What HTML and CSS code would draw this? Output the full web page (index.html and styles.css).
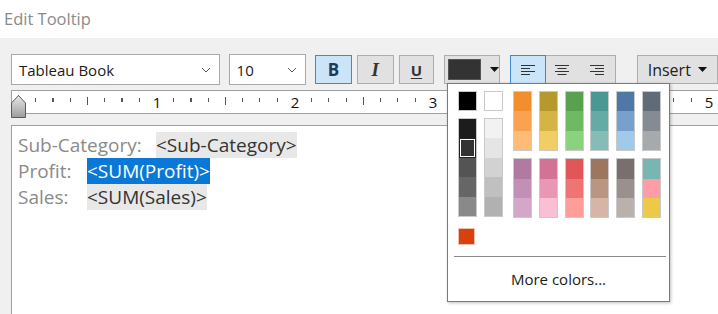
FILE: index.html
```html
<!DOCTYPE html>
<html lang="en">
<head>
    <meta charset="UTF-8">
    <title>Edit Tooltip</title>
    <link rel="stylesheet" href="styles.css">
</head>
<body>
    <div class="titlebar">Edit Tooltip</div>

    <div class="panel">
        <div class="toolbar">
            <div class="combo font-combo">
                <span>Tableau Book</span>
                <svg class="chev" width="10" height="6" viewBox="0 0 10 6"><polyline points="1,1 5,5 9,1" fill="none" stroke="#555" stroke-width="1"/></svg>
            </div>
            <div class="combo size-combo">
                <span>10</span>
                <svg class="chev" width="10" height="6" viewBox="0 0 10 6"><polyline points="1,1 5,5 9,1" fill="none" stroke="#555" stroke-width="1"/></svg>
            </div>
            <div class="btn fmt active bold">B</div>
            <div class="btn fmt italic">I</div>
            <div class="btn fmt underline">U</div>
            <div class="btn color-btn">
                <span class="cur-color"></span>
                <svg width="9" height="5" viewBox="0 0 9 5"><polygon points="0,0 9,0 4.5,5" fill="#111"/></svg>
            </div>
            <div class="align-group">
                <div class="align active">
                    <svg width="16" height="12" viewBox="0 0 16 12"><g stroke="#333" stroke-width="1"><line x1="1" y1="1.5" x2="15" y2="1.5"/><line x1="1" y1="4.5" x2="10" y2="4.5"/><line x1="1" y1="7.5" x2="15" y2="7.5"/><line x1="1" y1="10.5" x2="10" y2="10.5"/></g></svg>
                </div>
                <div class="align">
                    <svg width="16" height="12" viewBox="0 0 16 12"><g stroke="#333" stroke-width="1"><line x1="1" y1="1.5" x2="15" y2="1.5"/><line x1="3.5" y1="4.5" x2="12.5" y2="4.5"/><line x1="1" y1="7.5" x2="15" y2="7.5"/><line x1="3.5" y1="10.5" x2="12.5" y2="10.5"/></g></svg>
                </div>
                <div class="align">
                    <svg width="16" height="12" viewBox="0 0 16 12"><g stroke="#333" stroke-width="1"><line x1="1" y1="1.5" x2="15" y2="1.5"/><line x1="6" y1="4.5" x2="15" y2="4.5"/><line x1="1" y1="7.5" x2="15" y2="7.5"/><line x1="6" y1="10.5" x2="15" y2="10.5"/></g></svg>
                </div>
            </div>
            <div class="btn insert-btn">
                Insert
                <svg width="9" height="5" viewBox="0 0 9 5"><polygon points="0,0 9,0 4.5,5" fill="#111"/></svg>
            </div>
        </div>

        <div class="ruler">
            <svg class="indent" width="16" height="23" viewBox="0 0 16 23">
                <defs>
                    <linearGradient id="ind" x1="0" y1="0" x2="0" y2="1">
                        <stop offset="0" stop-color="#e8e8e8"/>
                        <stop offset="1" stop-color="#9c9c9c"/>
                    </linearGradient>
                </defs>
                <polygon points="7.5,0.5 14.5,8 14.5,22.5 0.5,22.5 0.5,8" fill="url(#ind)" stroke="#5a5a5a"/>
            </svg>
            <span class="num n1">1</span>
            <span class="num n2">2</span>
            <span class="num n3">3</span>
            <span class="num n4">4</span>
            <span class="num n5">5</span>
        </div>

        <div class="editor">
            <div class="line"><span class="lbl">Sub-Category:</span>&#9;<span class="field">&lt;Sub-Category&gt;</span></div>
            <div class="line"><span class="lbl">Profit:</span>&#9;<span class="field selected">&lt;SUM(Profit)&gt;</span></div>
            <div class="line"><span class="lbl">Sales:</span>&#9;<span class="field">&lt;SUM(Sales)&gt;</span></div>
        </div>
    </div>

    <div class="color-popup">
        <div class="swatches">
            <div class="basic">
                <div class="sw single" style="background:#000"></div>
                <div class="stack">
                    <div class="cell" style="background:#1c1c1c"></div>
                    <div class="cell picked" style="background:#333"></div>
                    <div class="cell" style="background:#545454"></div>
                    <div class="cell" style="background:#666"></div>
                    <div class="cell" style="background:#898989"></div>
                </div>
            </div>
            <div class="basic">
                <div class="sw single" style="background:#fff"></div>
                <div class="stack">
                    <div class="cell" style="background:#f2f2f2"></div>
                    <div class="cell" style="background:#e5e5e5"></div>
                    <div class="cell" style="background:#d2d2d2"></div>
                    <div class="cell" style="background:#c0c0c0"></div>
                    <div class="cell" style="background:#b1b1b1"></div>
                </div>
            </div>
            <div class="palettes">
                <div class="stack"><div class="cell" style="background:#f28e2b"></div><div class="cell" style="background:#f9a352"></div><div class="cell" style="background:#ffbc78"></div></div>
                <div class="stack"><div class="cell" style="background:#b6992d"></div><div class="cell" style="background:#d4b442"></div><div class="cell" style="background:#f1ce63"></div></div>
                <div class="stack"><div class="cell" style="background:#59a14f"></div><div class="cell" style="background:#6fb964"></div><div class="cell" style="background:#8cd17d"></div></div>
                <div class="stack"><div class="cell" style="background:#499894"></div><div class="cell" style="background:#64aaa5"></div><div class="cell" style="background:#86bcb6"></div></div>
                <div class="stack"><div class="cell" style="background:#4e79a7"></div><div class="cell" style="background:#77a1ca"></div><div class="cell" style="background:#a0cbe8"></div></div>
                <div class="stack"><div class="cell" style="background:#5f6b77"></div><div class="cell" style="background:#848b92"></div><div class="cell" style="background:#a7aaad"></div></div>
                <div class="stack"><div class="cell" style="background:#b07aa1"></div><div class="cell" style="background:#c290b6"></div><div class="cell" style="background:#d4a6c8"></div></div>
                <div class="stack"><div class="cell" style="background:#d37295"></div><div class="cell" style="background:#e897b4"></div><div class="cell" style="background:#fabfd2"></div></div>
                <div class="stack"><div class="cell" style="background:#e15759"></div><div class="cell" style="background:#ef7574"></div><div class="cell" style="background:#ff9d9a"></div></div>
                <div class="stack"><div class="cell" style="background:#9d7660"></div><div class="cell" style="background:#ba9582"></div><div class="cell" style="background:#d7b5a6"></div></div>
                <div class="stack"><div class="cell" style="background:#79706e"></div><div class="cell" style="background:#9a908d"></div><div class="cell" style="background:#bab0ac"></div></div>
                <div class="stack"><div class="cell" style="background:#76b7b2"></div><div class="cell" style="background:#ff9da7"></div><div class="cell" style="background:#edc948"></div></div>
            </div>
        </div>
        <div class="recent">
            <div class="sw small" style="background:#d8400e"></div>
        </div>
        <div class="sep"></div>
        <div class="more">More colors...</div>
    </div>
</body>
</html>
```

FILE: styles.css
```css
body, html {
    margin: 0;
    padding: 0;
    font-family: 'Open Sans', 'Noto Sans', sans-serif;
    background-color: #f0f0f0;
    overflow: hidden;
}
body {
    width: 718px;
    height: 314px;
    position: relative;
}

.titlebar {
    height: 38px;
    background: #fff;
    color: #8a8a8a;
    font-size: 16.5px;
    line-height: 38px;
    padding-left: 4px;
}

.panel {
    padding: 16px 0 0 11px;
}

/* toolbar */
.toolbar {
    display: flex;
    align-items: center;
    height: 31px;
    white-space: nowrap;
}
.combo {
    box-sizing: border-box;
    height: 31px;
    background: #fff;
    border: 1px solid #a9a9a9;
    display: flex;
    align-items: center;
    justify-content: space-between;
    padding: 0 8px 0 7px;
    font-size: 15px;
    color: #1a1a1a;
}
.font-combo { width: 210px; }
.size-combo { width: 78px; margin-left: 9px; }
.chev { margin-top: 1px; }

.btn {
    box-sizing: border-box;
    height: 29px;
    background: #e1e1e1;
    border: 1px solid #adadad;
    display: flex;
    align-items: center;
    justify-content: center;
    color: #222;
}
.fmt {
    width: 37px;
    margin-left: 5px;
    font-size: 16px;
}
.fmt.bold {
    margin-left: 9px;
    font-weight: 700;
    font-size: 17px;
    color: #1d3a57;
}
.fmt.italic {
    font-family: 'Liberation Serif', serif;
    font-style: italic;
    font-weight: 700;
    font-size: 19px;
    color: #333;
}
.fmt.underline {
    width: 36px;
    font-weight: 700;
    font-size: 15px;
    text-decoration: underline;
    text-underline-offset: 2px;
    color: #333;
}
.btn.active, .align.active {
    background: #cce4f7;
    border-color: #3b8ad3;
}
.color-btn {
    width: 56px;
    margin-left: 10px;
    justify-content: flex-start;
    padding-left: 3px;
    gap: 9px;
}
.cur-color {
    width: 33px;
    height: 21px;
    background: #333;
    border: 1px solid #555;
    box-sizing: border-box;
}
.align-group {
    display: flex;
    box-sizing: border-box;
    margin-left: 10px;
    height: 29px;
    width: 106px;
    border: 1px solid #adadad;
    background: #e1e1e1;
}
.align {
    flex: 1;
    display: flex;
    align-items: center;
    justify-content: center;
    border: 1px solid transparent;
    margin: -1px 0 -1px -1px;
}
.insert-btn {
    width: 82px;
    margin-left: 21px;
    font-size: 16px;
    gap: 7px;
    height: 29px;
}

/* ruler */
.ruler {
    position: relative;
    margin-top: 5px;
    height: 22px;
    background-color: #fff;
    border: 1px solid #a0a0a0;
    border-right: none;
    background-image:
        linear-gradient(#333, #333),
        repeating-linear-gradient(90deg, #555 0 1px, transparent 1px 138px),
        repeating-linear-gradient(90deg, #555 0 1px, transparent 1px 17.25px);
    background-repeat: no-repeat;
    background-size: 1px 8px, 720px 8px, 720px 4px;
    background-position: 6px 4px, 75px 6px, 6px 7px;
}
.indent {
    position: absolute;
    left: -1px;
    top: 4px;
}
.num {
    position: absolute;
    top: 0;
    line-height: 22px;
    font-size: 15px;
    color: #111;
    background: #fff;
    padding: 0 3px;
    transform: translateX(-50%);
}
.n1 { left: 145px; }
.n2 { left: 283px; }
.n3 { left: 421px; }
.n4 { left: 559px; }
.n5 { left: 697px; }

/* editor */
.editor {
    margin-top: 11px;
    height: 182px;
    background: #fff;
    border-top: 1px solid #a0a0a0;
    border-left: 1px solid #a0a0a0;
    padding: 6px 0 0 6px;
    font-size: 19px;
    line-height: 26px;
}
.line {
    white-space: pre;
    tab-size: 69px;
}
.lbl { color: #8a8a8a; }
.field {
    background: #e8e8e8;
    color: #333;
}
.field.selected {
    background: #0a78d7;
    color: #fff;
}

/* color picker popup */
.color-popup {
    position: absolute;
    left: 447px;
    top: 83px;
    width: 223px;
    height: 219px;
    box-sizing: border-box;
    background: #fff;
    border: 1px solid #7a7a7a;
    box-shadow: 1px 1px 3px rgba(0, 0, 0, 0.25);
    padding: 7px 0 0 10px;
}
.swatches {
    display: flex;
    gap: 7px;
}
.basic {
    display: flex;
    flex-direction: column;
    gap: 7px;
    width: 19px;
}
.sw, .stack {
    box-sizing: border-box;
    border: 1px solid #c9c9c9;
}
.sw.single { height: 20px; }
.stack {
    display: flex;
    flex-direction: column;
}
.cell {
    height: 19.4px;
    box-sizing: border-box;
}
.cell.picked {
    border: 1px solid #222;
    box-shadow: inset 0 0 0 1px #fff;
}
.palettes {
    margin-left: 3px;
    display: grid;
    grid-template-columns: repeat(6, 19px);
    column-gap: 6.8px;
    row-gap: 7px;
}
.recent {
    margin-top: 10px;
}
.sw.small {
    width: 17px;
    height: 17px;
    border-color: #f0c0b0;
}
.sep {
    height: 1px;
    background: #8a8a8a;
    margin: 11px 3px 0 -4px;
}
.more {
    text-align: center;
    margin-left: -10px;
    font-size: 15px;
    line-height: 20px;
    margin-top: 12px;
    color: #1a1a1a;
}
```
